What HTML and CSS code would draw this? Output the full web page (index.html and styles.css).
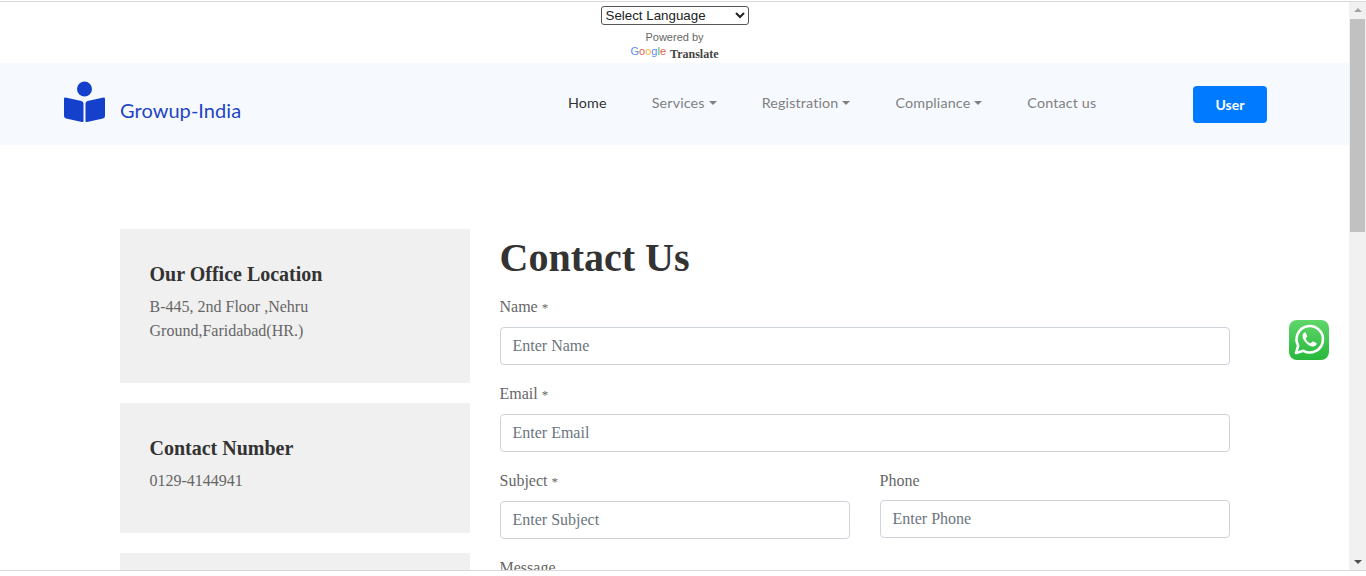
FILE: index.html
```html
<!DOCTYPE html>
<html lang="en">
<head>
<meta charset="utf-8">
<title>Contact Us - Growup-India</title>
<link rel="stylesheet" href="styles.css">
</head>
<body>
<div class="window">
  <div class="page">
    <div class="translate">
      <select class="lang"><option>Select Language</option></select>
      <div class="powered">Powered by</div>
      <div class="gt"><span class="google"><span class="g-b">G</span><span class="g-r">o</span><span class="g-y">o</span><span class="g-b">g</span><span class="g-g">l</span><span class="g-r">e</span></span> <span class="gt-word">Translate</span></div>
    </div>
    <header class="nav">
      <a class="brand">
        <svg class="brand-icon" viewBox="0 0 41 42" width="41" height="42">
          <circle cx="20.5" cy="8" r="7.5" fill="#1440cc"/>
          <path d="M1.5 16.6 L17.5 20 Q19.5 20.5 19.5 22.5 L19.5 40 Q19.5 41.4 18 41 L2 37.4 Q0 37 0 35 L0 18 Q0 16.3 1.5 16.6Z" fill="#1440cc"/>
          <path d="M39.5 16.6 L23.5 20 Q21.5 20.5 21.5 22.5 L21.5 40 Q21.5 41.4 23 41 L39 37.4 Q41 37 41 35 L41 18 Q41 16.3 39.5 16.6Z" fill="#1440cc"/>
        </svg>
        <span class="brand-text">Growup-India</span>
      </a>
      <nav class="menu">
        <a class="item active">Home</a>
        <a class="item caret">Services</a>
        <a class="item caret">Registration</a>
        <a class="item caret">Compliance</a>
        <a class="item">Contact us</a>
      </nav>
      <a class="user">User</a>
    </header>
    <main class="content">
      <aside class="cards">
        <section class="card card-office">
          <h3>Our Office Location</h3>
          <p>B-445, 2nd Floor ,Nehru Ground,Faridabad(HR.)</p>
        </section>
        <section class="card card-phone">
          <h3>Contact Number</h3>
          <p>0129-4144941</p>
        </section>
        <section class="card"></section>
      </aside>
      <form class="form">
        <h1>Contact Us</h1>
        <div class="field">
          <label>Name <span class="req">*</span></label>
          <input placeholder="Enter Name">
        </div>
        <div class="field">
          <label>Email <span class="req">*</span></label>
          <input placeholder="Enter Email">
        </div>
        <div class="two">
          <div class="field">
            <label>Subject <span class="req">*</span></label>
            <input placeholder="Enter Subject">
          </div>
          <div class="field">
            <label>Phone</label>
            <input placeholder="Enter Phone">
          </div>
        </div>
        <div class="field">
          <label>Message</label>
        </div>
      </form>
    </main>
  </div>
  <div class="scrollbar">
    <span class="arrow up"></span>
    <span class="thumb"></span>
    <span class="arrow down"></span>
  </div>
  <a class="whatsapp" aria-label="WhatsApp">
    <svg viewBox="0 0 40 40" width="40" height="40">
      <defs><linearGradient id="wa" x1="0" y1="0" x2="0" y2="1"><stop offset="0" stop-color="#5fd66a"/><stop offset="1" stop-color="#28b83c"/></linearGradient></defs>
      <rect width="40" height="40" rx="8" fill="url(#wa)"/>
      <path d="M7 33 L9.2 25.6 A13.2 13.2 0 1 1 14.4 30.8 Z" fill="none" stroke="#fff" stroke-width="2.6" stroke-linejoin="round"/>
      <path d="M15.5 12.5 C14 13.2 13.2 15 13.8 17.4 C14.8 21 18.8 25.4 23 26.4 C25.2 26.9 27.2 25.8 27.6 24 C27.7 23.4 27.5 23.1 27 22.8 L24.2 21.5 C23.7 21.3 23.4 21.4 23.1 21.8 L22 23.1 C21.7 23.4 21.4 23.4 21 23.2 C19.2 22.4 17.6 20.8 16.8 19 C16.6 18.6 16.7 18.3 17 18 L17.9 16.9 C18.2 16.6 18.2 16.3 18.1 15.9 L16.9 13 C16.6 12.4 16.1 12.2 15.5 12.5Z" fill="#fff"/>
    </svg>
  </a>
</div>
</body>
</html>
```
FILE: styles.css
```css
* { box-sizing: border-box; }
html, body { margin: 0; height: 576px; overflow: hidden; background: #fff; }
body { padding: 1px 0 5px; }
.window {
  height: 570px;
  display: flex;
  position: relative;
  border-top: 1px solid #d9d9d9;
  border-bottom: 1px solid #d9d9d9;
  overflow: hidden;
}
.page { flex: 1; min-width: 0; overflow: hidden; font-family: "Liberation Serif", serif; color: #666; }

.translate { height: 61px; display: flex; flex-direction: column; align-items: center; }
.lang {
  width: 148px; height: 19px; margin-top: 4px; padding: 0;
  font: 13.33px "Liberation Sans", sans-serif; color: #222;
  background: #fff; border: 1px solid #555; border-radius: 3px;
}
.powered { margin-top: 5px; font: 11px/14px "Liberation Sans", sans-serif; color: #666; }
.gt { margin-top: 1px; height: 16px; line-height: 16px; white-space: nowrap; }
.google { font: 11px "Liberation Sans", sans-serif; vertical-align: 3px; }
.g-b { color: #5b8def; } .g-r { color: #e5604f; } .g-y { color: #eeb93a; } .g-g { color: #4fae6c; }
.gt-word { font: bold 12px "Liberation Serif", serif; color: #444; }

.nav { height: 82px; background: #f6faff; display: flex; align-items: center; padding-left: 64px; font-family: Lato, sans-serif; }
.brand { display: flex; align-items: flex-start; align-self: flex-start; width: 504px; padding-top: 18px; }
.brand-icon { display: block; flex: none; }
.brand-text { margin: 17px 0 0 15px; font-size: 20px; line-height: 24px; letter-spacing: .05px; color: #1f45c4; }
.menu { display: flex; gap: 45px; width: 625px; margin-top: -2px; }
.item { font-size: 14.3px; letter-spacing: .15px; color: #808080; line-height: 20px; white-space: nowrap; }
.item.active { color: #333; }
.caret::after {
  content: ""; display: inline-block; margin-left: 4px; vertical-align: 3px;
  border-top: 4px solid #808080; border-left: 4px solid transparent; border-right: 4px solid transparent;
}
.user {
  width: 74px; height: 37px; border-radius: 4px; background: #007bff; color: #fff;
  font-size: 14px; font-weight: 700; text-align: center; line-height: 37px;
}

.content {
  display: grid; grid-template-columns: 350px 730px; gap: 30px;
  padding: 84px 0 0 119.5px;
}
.cards { display: flex; flex-direction: column; gap: 20px; }
.card { background: #f0f0f0; padding: 30px; }
.card-office { height: 154px; }
.card-phone { height: 130px; }
.card:last-child { height: 100px; }
.card h3 { margin: 3px 0 9px; font-size: 20px; line-height: 24px; font-weight: 700; color: #333; }
.card p { margin: 0; font-size: 16px; line-height: 24px; color: #666; }

.form h1 { margin: 5px 0 13px; font-size: 40px; line-height: 48px; font-weight: 700; color: #333; }
.field { margin-bottom: 17px; }
.field label { display: block; font-size: 16px; line-height: 24px; margin-bottom: 7px; color: #666; }
.req { font-size: 13px; }
.field input {
  display: block; width: 100%; height: 38px; padding: 0 12px;
  font: 16px "Liberation Serif", serif; color: #495057;
  background: #fff; border: 1px solid #ced4da; border-radius: 4px;
}
.field input::placeholder { color: #6c757d; opacity: 1; }
.two { display: grid; grid-template-columns: 350px 350px; gap: 30px; }

.scrollbar { width: 17px; flex: none; background: #f1f1f1; display: flex; flex-direction: column; align-items: center; }
.arrow { height: 17px; width: 17px; flex: none; position: relative; }
.arrow::after { content: ""; position: absolute; left: 5px; border-left: 4px solid transparent; border-right: 4px solid transparent; }
.arrow.up::after { top: 6px; border-bottom: 4px solid #a3a3a3; }
.arrow.down { margin-top: auto; }
.arrow.down::after { top: 7px; border-top: 4px solid #505050; }
.thumb { width: 15px; height: 213px; background: #c1c1c1; }

.whatsapp { position: absolute; left: 1289px; top: 318px; width: 40px; height: 40px; display: block; }
.whatsapp svg { display: block; }
```
